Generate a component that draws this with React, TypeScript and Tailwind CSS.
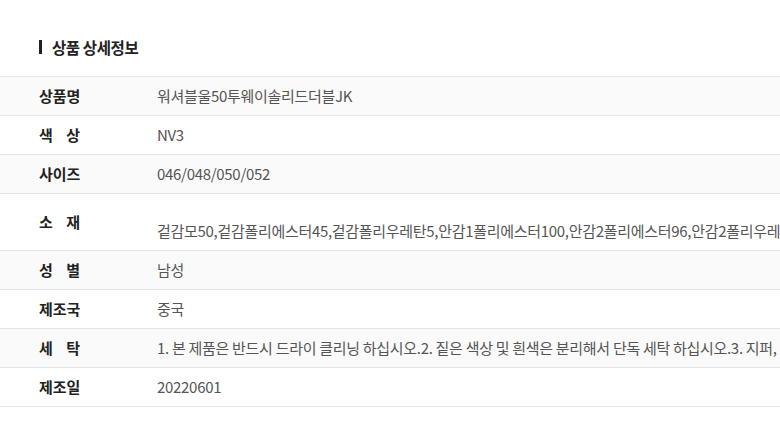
import React from "react";

const rows: { label: string; spread?: boolean; value: string; tall?: boolean }[] = [
  { label: "상품명", value: "워셔블울50투웨이솔리드더블JK" },
  { label: "색상", spread: true, value: "NV3" },
  { label: "사이즈", value: "046/048/050/052" },
  {
    label: "소재",
    spread: true,
    tall: true,
    value:
      "겉감모50,겉감폴리에스터45,겉감폴리우레탄5,안감1폴리에스터100,안감2폴리에스터96,안감2폴리우레탄4",
  },
  { label: "성별", spread: true, value: "남성" },
  { label: "제조국", value: "중국" },
  {
    label: "세탁",
    spread: true,
    value:
      "1. 본 제품은 반드시 드라이 클리닝 하십시오.2. 짙은 색상 및 흰색은 분리해서 단독 세탁 하십시오.3. 지퍼, 단추 등 부자재는 잠근 후 세탁하십시오.",
  },
  { label: "제조일", value: "20220601" },
];

export default function App() {
  return (
    <div
      className="w-[780px] h-[445px] overflow-hidden bg-white"
      style={{ fontFamily: '"Noto Sans CJK KR", "Noto Sans", sans-serif' }}
    >
      <div className="pt-[36px] pl-[39px] h-[76px] flex items-start">
        <div className="flex items-center h-[22px]">
          <span className="w-[3px] h-[14px] bg-[#222]" />
          <span className="ml-[10px] text-[15.5px] font-bold text-[#222] leading-[22px] tracking-[-0.4px]">
            상품 상세정보
          </span>
        </div>
      </div>
      <div className="border-t border-[#e5e5e5]">
        {rows.map((r, i) => (
          <div
            key={i}
            className={`flex items-center border-b border-[#e5e5e5] ${
              i % 2 === 0 ? "bg-[#fafafa]" : "bg-white"
            } ${r.tall ? "h-[57px]" : "h-[39px]"}`}
          >
            <div className="w-[157px] shrink-0 pl-[39px]">
              {r.spread ? (
                <div className="w-[41px] flex justify-between text-[15px] font-bold text-[#222] leading-[18px]">
                  <span>{r.label[0]}</span>
                  <span>{r.label[1]}</span>
                </div>
              ) : (
                <div className="text-[15px] font-bold text-[#222] leading-[18px]">{r.label}</div>
              )}
            </div>
            <div className="whitespace-nowrap text-[15px] text-[#555] leading-[18px] tracking-[-0.3px]">
              {r.tall ? (
                <>
                  <div>&nbsp;</div>
                  <div>{r.value}</div>
                </>
              ) : (
                r.value
              )}
            </div>
          </div>
        ))}
      </div>
    </div>
  );
}
